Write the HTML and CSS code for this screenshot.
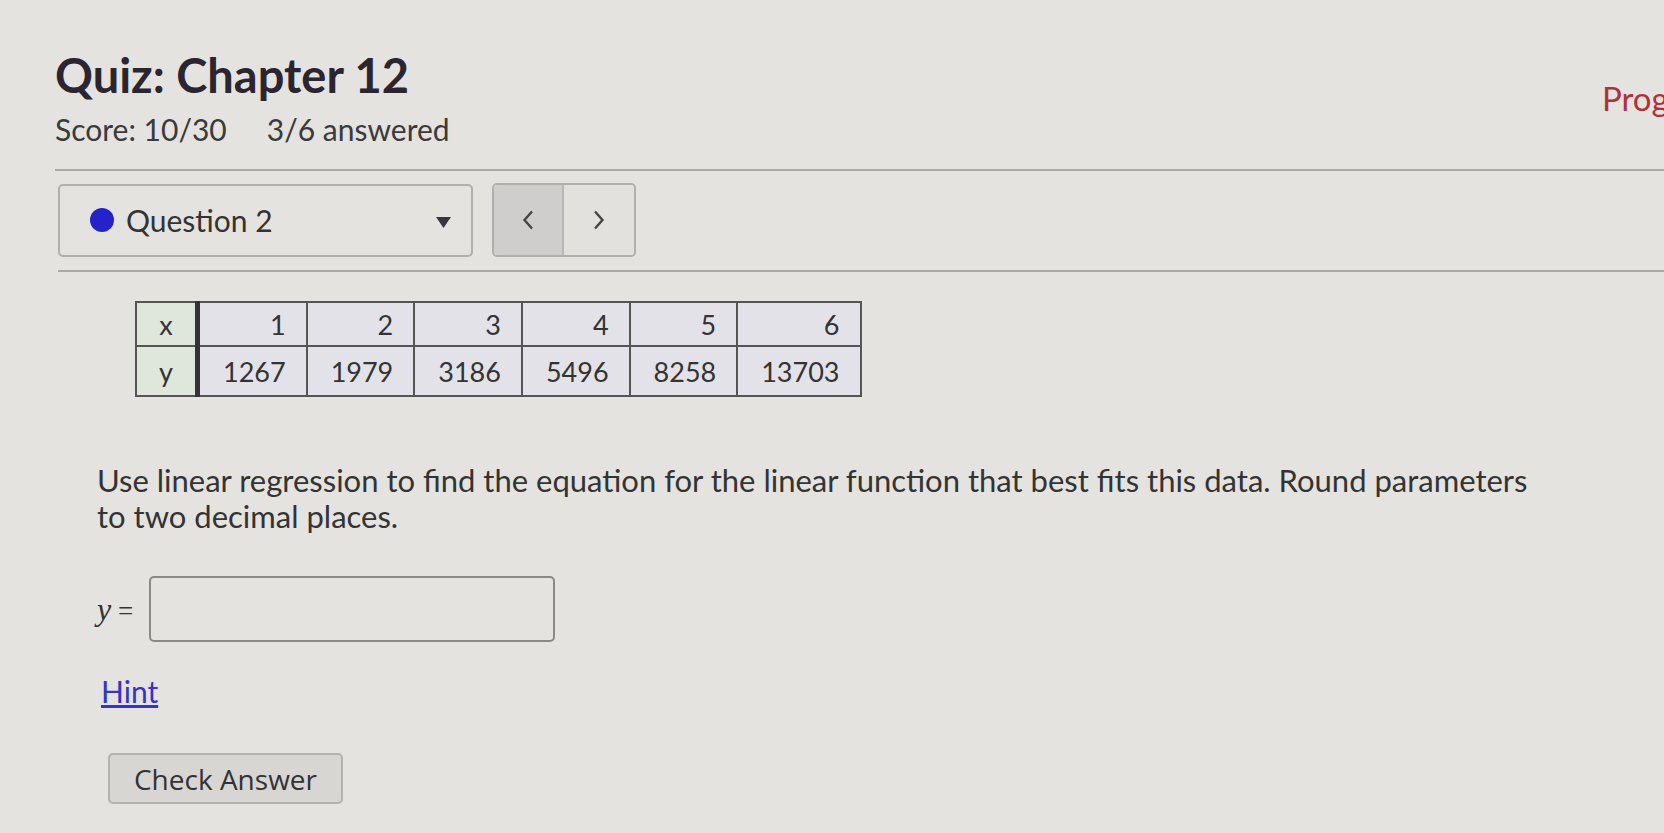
FILE: index.html
```html
<!DOCTYPE html>
<html lang="en">
<head>
<meta charset="utf-8">
<title>Quiz: Chapter 12</title>
<link rel="stylesheet" href="styles.css">
</head>
<body>
<div class="page">
  <header class="quiz-header">
    <div class="quiz-info">
      <h1 class="quiz-title">Quiz: Chapter 12</h1>
      <div class="quiz-score">
        <span>Score: 10/30</span>
        <span>3/6 answered</span>
      </div>
    </div>
    <a class="progress-link">Progress</a>
  </header>

  <hr class="rule">

  <nav class="question-nav">
    <div class="question-select">
      <span class="dot"></span>
      <span class="question-label">Question 2</span>
      <svg class="caret" width="15" height="11" viewBox="0 0 15 11"><path d="M0 0 H15 L7.5 11 Z" fill="#3a3440"/></svg>
    </div>
    <div class="nav-buttons">
      <button class="nav-btn prev" aria-label="Previous">
        <svg width="12" height="20" viewBox="0 0 12 20"><path d="M10 1.5 L2.5 10 L10 18.5" fill="none" stroke="#444" stroke-width="2.4"/></svg>
      </button>
      <button class="nav-btn next" aria-label="Next">
        <svg width="12" height="20" viewBox="0 0 12 20"><path d="M2 1.5 L9.5 10 L2 18.5" fill="none" stroke="#444" stroke-width="2.4"/></svg>
      </button>
    </div>
  </nav>

  <hr class="rule rule-nav">

  <section class="question">
    <table class="data-table">
      <tr>
        <th>x</th>
        <td>1</td><td>2</td><td>3</td><td>4</td><td>5</td><td>6</td>
      </tr>
      <tr>
        <th>y</th>
        <td>1267</td><td>1979</td><td>3186</td><td>5496</td><td>8258</td><td>13703</td>
      </tr>
    </table>

    <p class="question-text">Use linear regression to find the equation for the linear function that best fits this data. Round parameters to two decimal places.</p>

    <div class="answer-row">
      <span class="math"><i>y</i> =</span>
      <input class="answer-input" type="text">
    </div>

    <a class="hint">Hint</a>

    <button class="check-btn">Check Answer</button>
  </section>
</div>
</body>
</html>
```

FILE: styles.css
```css
html, body {
  margin: 0;
  padding: 0;
  overflow: hidden;
}

body {
  background: #e4e3e0;
  font-family: Lato, "Open Sans", sans-serif;
  color: #333;
  width: 1664px;
  height: 833px;
}

.page {
  padding: 47px 0 0 55px;
}

.quiz-header {
  display: flex;
  justify-content: space-between;
  align-items: flex-start;
}

.quiz-title {
  margin: 0;
  font-size: 47px;
  font-weight: 700;
  line-height: 1.2;
  color: #2b2530;
}

.quiz-score {
  margin-top: 8px;
  font-size: 30px;
  line-height: 36px;
  color: #3a3a3a;
  display: flex;
  gap: 40px;
}

.progress-link {
  margin-top: 31px;
  width: 62px;
  white-space: nowrap;
  font-size: 33px;
  line-height: 40px;
  color: #b3303a;
}

.rule {
  border: 0;
  border-top: 2px solid #a9a8a6;
  margin: 22px 0 0 0;
}

.question-nav {
  display: flex;
  align-items: center;
  gap: 19px;
  margin-top: 12px;
  padding-left: 3px;
}

.question-select {
  box-sizing: border-box;
  width: 415px;
  height: 73px;
  border: 2px solid #b0afad;
  border-radius: 5px;
  display: flex;
  align-items: center;
  padding: 0 20px 0 30px;
}

.dot {
  width: 24px;
  height: 24px;
  border-radius: 50%;
  background: #2323c9;
  flex-shrink: 0;
}

.question-label {
  margin-left: 12px;
  font-size: 30px;
  color: #333;
  flex: 1;
}

.caret {
  display: block;
  margin-top: 4px;
}

.nav-buttons {
  display: flex;
  box-sizing: border-box;
  height: 74px;
  border: 2px solid #b0afad;
  border-radius: 5px;
  overflow: hidden;
}

.nav-btn {
  width: 70px;
  border: 0;
  margin: 0;
  padding: 0;
  display: flex;
  align-items: center;
  justify-content: center;
}

.nav-btn.prev {
  background: #cfcecc;
  border-right: 2px solid #b8b7b5;
}

.nav-btn.next {
  background: #e2e1de;
}

.rule-nav {
  margin-top: 13px;
  margin-left: 3px;
}

.question {
  padding-left: 42px;
  display: flex;
  flex-direction: column;
  align-items: flex-start;
}

.data-table {
  margin: 29px 0 0 38px;
  border-collapse: collapse;
  border: 2px solid #444;
  font-size: 27px;
  color: #333;
}

.data-table th,
.data-table td {
  border: 2px solid #555;
  font-weight: 400;
  padding: 0 20px 0 23px;
  text-align: right;
}

.data-table tr:first-child th,
.data-table tr:first-child td {
  height: 42px;
}

.data-table tr:last-child th,
.data-table tr:last-child td {
  height: 48px;
}

.data-table th {
  width: 58px;
  padding: 0;
  text-align: center;
  background: #dfe6dc;
  border-right: 5px solid #333;
}

.data-table td {
  background: #e3e2e8;
}

.question-text {
  margin: 65px 0 0 0;
  width: 1460px;
  font-size: 31px;
  line-height: 36px;
  color: #333;
}

.answer-row {
  margin-top: 42px;
  display: flex;
  align-items: center;
  gap: 16px;
}

.math {
  font-family: "Liberation Serif", serif;
  font-size: 27px;
  color: #333;
}

.math i {
  font-size: 32px;
}

.answer-input {
  box-sizing: border-box;
  width: 406px;
  height: 66px;
  border: 2px solid #8a8988;
  border-radius: 5px;
  background: transparent;
}

.hint {
  margin-top: 31px;
  font-size: 30px;
  line-height: 36px;
  color: #3434c6;
  text-decoration: underline;
  margin-left: 4px;
}

.check-btn {
  margin: 44px 0 0 11px;
  box-sizing: border-box;
  width: 235px;
  height: 51px;
  border: 2px solid #b3b2b0;
  border-radius: 5px;
  background: #d7d6d3;
  font-family: "Open Sans", Lato, sans-serif;
  font-size: 28px;
  color: #333;
  padding: 0;
}
```
